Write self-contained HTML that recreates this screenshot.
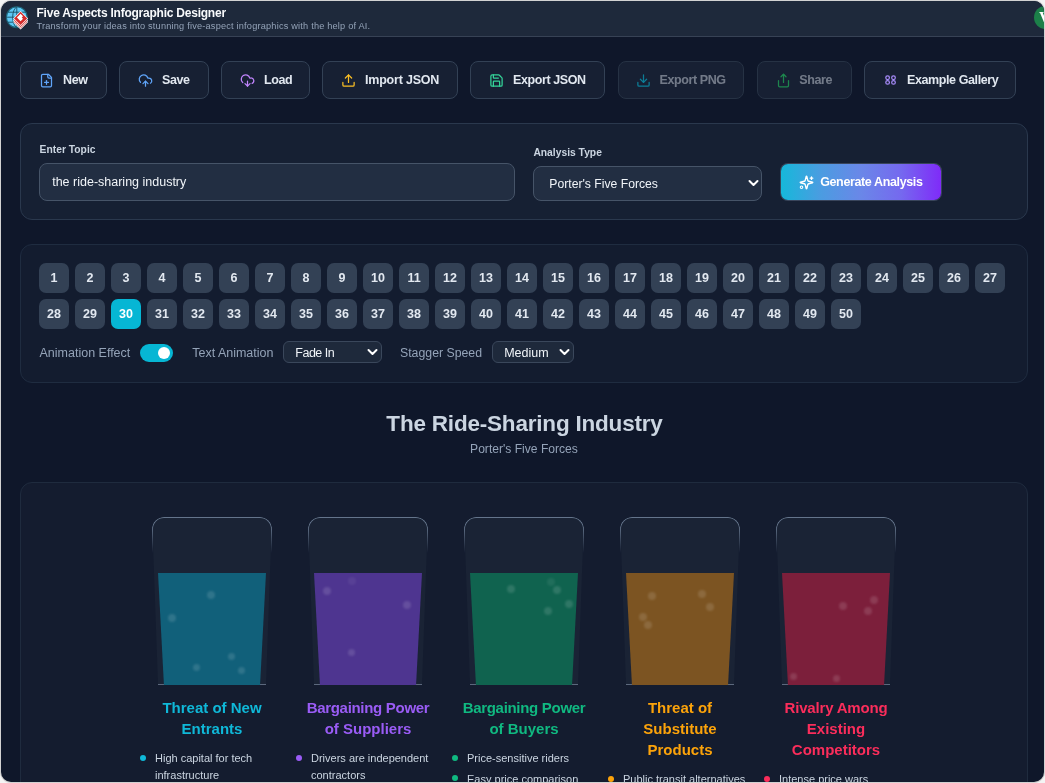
<!DOCTYPE html><html><head><meta charset="utf-8"><style>
*{box-sizing:border-box;margin:0;padding:0}
html,body{width:1045px;height:783px;overflow:hidden;background:#f4f4f4;font-family:"Liberation Sans",sans-serif}
#win{position:absolute;left:1px;top:1px;width:1043px;height:781px;border-radius:10px;overflow:hidden;background:#0f172a;box-shadow:0 0 0 1px #d2d2d2;will-change:transform}
.a{position:absolute;white-space:nowrap;line-height:1}
#hdr{position:absolute;left:0;top:0;width:1043px;height:36px;background:#1e293b;border-bottom:1px solid #374255}
.btn{position:absolute;top:60px;height:38px;border:1px solid #334155;background:#172033;border-radius:8px;color:#e2e8f0;white-space:nowrap}
.btn svg{position:absolute;left:18px;top:10.8px;width:15px;height:15px;fill:none;stroke-width:2;stroke-linecap:round;stroke-linejoin:round}
.btn span{position:absolute;left:42px;top:12.4px;font-size:12.5px;font-weight:bold;letter-spacing:-0.4px;line-height:1}
.btn.dis span{opacity:.45}.btn.dis svg{opacity:.62}.btn.dis{border-color:#263244}
.panel{position:absolute;left:19px;width:1008px;border-radius:12px}
.num{position:absolute;width:30px;height:30px;border-radius:7px;background:#334155;color:#e2e8f0;font-size:12.5px;font-weight:bold;text-align:center;line-height:30px}
.num.on{background:#06b6d4;color:#fff}
.cup{position:absolute;top:516px;width:120px;height:168px}
.body{position:absolute;left:0;top:0;width:120px;height:168px;background:#1a2335;clip-path:polygon(0 0,100% 0,95% 100%,5% 100%);border-radius:12px 12px 0 0}
.rim{position:absolute;left:0;top:0;width:120px;height:40px;border:1px solid #64748b;border-bottom:none;border-radius:12px 12px 0 0;-webkit-mask-image:linear-gradient(#000 0,#000 8px,transparent 36px)}
.liq{position:absolute;left:6px;top:56px;width:108px;height:112px;clip-path:polygon(0 0,100% 0,94.5% 100%,5.5% 100%)}
.bub{position:absolute;border-radius:50%;background:rgba(255,255,255,.13);filter:blur(.8px)}
.base{position:absolute;left:6px;top:167px;width:108px;height:1px;background:rgba(148,163,184,.55)}
.ttl{position:absolute;width:144px;text-align:center;font-size:15px;font-weight:bold;line-height:21px;white-space:nowrap}
.li{position:absolute;font-size:11px;line-height:16.8px;color:#cbd5e1;white-space:nowrap}
.dot{position:absolute;width:6px;height:6px;border-radius:50%}
</style></head><body><div id="win">
<div id="hdr">
<svg class="a" style="left:4px;top:4px" width="26" height="26" viewBox="0 0 26 26">
<circle cx="11.8" cy="12.2" r="10.4" fill="#5ec8f5" stroke="#1d6478" stroke-width="1.1"/>
<path d="M11.8 1.8v20.8M1.4 12.2h20.8M2.6 7.2h18.4M2.6 17.2h18.4M11.8 1.8c-5.5 3-5.5 17.8 0 20.8" fill="none" stroke="#1b4f63" stroke-width="0.9"/>
<g transform="translate(15.6 13.4) rotate(45)">
<rect x="-2.75" y="-2.75" width="10.6" height="10.6" fill="#fff"/>
<rect x="-2.1" y="-2.1" width="9.3" height="9.3" fill="#d42b2b"/>
<rect x="-3.9" y="-3.9" width="10.6" height="10.6" fill="#fff"/>
<rect x="-3.25" y="-3.25" width="9.3" height="9.3" fill="#d42b2b"/>
<rect x="-5.3" y="-5.3" width="10.6" height="10.6" fill="#fff"/>
<rect x="-4.65" y="-4.65" width="9.3" height="9.3" fill="#d42b2b"/>
<path d="M-3.2 -3.2h3.4v1.8h1.8v3.4h-5.2z" fill="#fff"/>
</g></svg>
<div class="a" style="left:35.5px;top:5.64px;font-size:12px;font-weight:bold;color:#f8fafc;letter-spacing:-0.23px">Five Aspects Infographic Designer</div>
<div class="a" style="left:35.5px;top:20.51px;font-size:9.2px;color:#94a3b8;letter-spacing:0.2px">Transform your ideas into stunning five-aspect infographics with the help of AI.</div>
<div class="a" style="left:1032.5px;top:4.8px;width:23.5px;height:23.5px;border-radius:50%;background:#1c8049;color:#fff;font-family:'Liberation Serif',serif;font-weight:bold;font-size:16px;line-height:24.5px;padding-left:5.5px">V</div>
</div>
<div class="btn" style="left:19px;width:87px"><svg viewBox="0 0 24 24" stroke="#60a5fa"><path d="M15 2H6a2 2 0 0 0-2 2v16a2 2 0 0 0 2 2h12a2 2 0 0 0 2-2V7Z"/><path d="M14 2v4a2 2 0 0 0 2 2h4"/><path d="M9 15h6"/><path d="M12 18v-6"/></svg><span style="">New</span></div>
<div class="btn" style="left:118px;width:90px"><svg viewBox="0 0 24 24" stroke="#60a5fa"><path d="M12 13v8"/><path d="M4 14.899A7 7 0 1 1 15.71 8h1.79a4.5 4.5 0 0 1 2.5 8.242"/><path d="m8 17 4-4 4 4"/></svg><span style="">Save</span></div>
<div class="btn" style="left:220px;width:89px"><svg viewBox="0 0 24 24" stroke="#c084fc"><path d="M12 13v8l-4-4"/><path d="m12 21 4-4"/><path d="M4.393 15.269A7 7 0 1 1 15.71 8h1.79A4.5 4.5 0 0 1 19.436 16.6"/></svg><span style="">Load</span></div>
<div class="btn" style="left:321px;width:136px"><svg viewBox="0 0 24 24" stroke="#fbbf24"><path d="M21 15v4a2 2 0 0 1-2 2H5a2 2 0 0 1-2-2v-4"/><polyline points="17 8 12 3 7 8"/><line x1="12" x2="12" y1="3" y2="15"/></svg><span style="letter-spacing:-0.2px">Import JSON</span></div>
<div class="btn" style="left:469px;width:135px"><svg viewBox="0 0 24 24" stroke="#34d399"><path d="M15.2 3a2 2 0 0 1 1.4.6l3.8 3.8a2 2 0 0 1 .6 1.4V19a2 2 0 0 1-2 2H5a2 2 0 0 1-2-2V5a2 2 0 0 1 2-2z"/><path d="M17 21v-7a1 1 0 0 0-1-1H8a1 1 0 0 0-1 1v7"/><path d="M7 3v4a1 1 0 0 0 1 1h7"/></svg><span style="">Export JSON</span></div>
<div class="btn dis" style="left:617px;width:126px"><svg viewBox="0 0 24 24" stroke="#06b6d4" style="left:17px"><path d="M21 15v4a2 2 0 0 1-2 2H5a2 2 0 0 1-2-2v-4"/><polyline points="7 10 12 15 17 10"/><line x1="12" x2="12" y1="15" y2="3"/></svg><span style="left:40.5px">Export PNG</span></div>
<div class="btn dis" style="left:756px;width:95px"><svg viewBox="0 0 24 24" stroke="#22c55e"><path d="M4 12v8a2 2 0 0 0 2 2h12a2 2 0 0 0 2-2v-8"/><polyline points="16 6 12 2 8 6"/><line x1="12" x2="12" y1="2" y2="15"/></svg><span style="left:41.3px">Share</span></div>
<div class="btn" style="left:863px;width:152px"><svg viewBox="0 0 24 24" stroke="#a78bfa"><circle cx="7.35" cy="7.5" r="2.9"/><circle cx="16.8" cy="7.5" r="2.9"/><circle cx="7.35" cy="15" r="2.9"/><circle cx="16.8" cy="15" r="2.9"/></svg><span style="">Example Gallery</span></div>
<div class="panel" style="top:122px;height:97px;background:#162033;border:1px solid #2a384d"></div>
<div class="a" style="left:38.6px;top:144.28px;font-size:10.3px;font-weight:bold;color:#cbd5e1">Enter Topic</div>
<div class="a" style="left:38px;top:162px;width:476px;height:38px;border:1px solid #465468;background:#222e42;border-radius:8px"></div>
<div class="a" style="left:51.2px;top:175.32px;font-size:12.5px;color:#f1f5f9">the ride-sharing industry</div>
<div class="a" style="left:532.4px;top:147.48px;font-size:10.3px;font-weight:bold;color:#cbd5e1">Analysis Type</div>
<div class="a" style="left:532px;top:165px;width:229px;height:35px;border:1px solid #465468;background:#222e42;border-radius:8px"></div>
<div class="a" style="left:548.3px;top:177.27px;font-size:12.2px;color:#f1f5f9">Porter's Five Forces</div>
<svg class="a" style="left:746.5px;top:178px" width="11" height="9" viewBox="0 0 11 9"><path d="M1.5 2l4 4 4-4" fill="none" stroke="#fff" stroke-width="2" stroke-linecap="round" stroke-linejoin="round"/></svg>
<div class="a" style="left:779.7px;top:163px;width:160.5px;height:36px;border-radius:7px;background:linear-gradient(90deg,#16b8da 0%,#4b9ce1 25%,#6a87e8 50%,#7569ef 75%,#7f2bf8 100%);box-shadow:0 0 0 1px rgba(100,116,139,.45)"></div>
<svg class="a" style="left:797.9px;top:174px" width="15" height="15" viewBox="0 0 24 24" fill="none" stroke="#fff" stroke-width="2.2" stroke-linecap="round" stroke-linejoin="round"><path d="M9.937 15.5A2 2 0 0 0 8.5 14.063l-6.135-1.582a.5.5 0 0 1 0-.962L8.5 9.936A2 2 0 0 0 9.937 8.5l1.582-6.135a.5.5 0 0 1 .963 0L14.063 8.5A2 2 0 0 0 15.5 9.937l6.135 1.581a.5.5 0 0 1 0 .964L15.5 14.063a2 2 0 0 0-1.437 1.437l-1.582 6.135a.5.5 0 0 1-.963 0z"/><path d="M20 3v4"/><path d="M22 5h-4"/><circle cx="4" cy="19.5" r="2" stroke-width="1.7"/></svg>
<div class="a" style="left:819.2px;top:175.02px;font-size:12.5px;font-weight:bold;color:#fff;letter-spacing:-0.37px">Generate Analysis</div>
<div class="panel" style="top:243px;height:139px;background:#131c2f;border:1px solid #1f2c40"></div>
<div class="num" style="left:38px;top:262px">1</div>
<div class="num" style="left:74px;top:262px">2</div>
<div class="num" style="left:110px;top:262px">3</div>
<div class="num" style="left:146px;top:262px">4</div>
<div class="num" style="left:182px;top:262px">5</div>
<div class="num" style="left:218px;top:262px">6</div>
<div class="num" style="left:254px;top:262px">7</div>
<div class="num" style="left:290px;top:262px">8</div>
<div class="num" style="left:326px;top:262px">9</div>
<div class="num" style="left:362px;top:262px">10</div>
<div class="num" style="left:398px;top:262px">11</div>
<div class="num" style="left:434px;top:262px">12</div>
<div class="num" style="left:470px;top:262px">13</div>
<div class="num" style="left:506px;top:262px">14</div>
<div class="num" style="left:542px;top:262px">15</div>
<div class="num" style="left:578px;top:262px">16</div>
<div class="num" style="left:614px;top:262px">17</div>
<div class="num" style="left:650px;top:262px">18</div>
<div class="num" style="left:686px;top:262px">19</div>
<div class="num" style="left:722px;top:262px">20</div>
<div class="num" style="left:758px;top:262px">21</div>
<div class="num" style="left:794px;top:262px">22</div>
<div class="num" style="left:830px;top:262px">23</div>
<div class="num" style="left:866px;top:262px">24</div>
<div class="num" style="left:902px;top:262px">25</div>
<div class="num" style="left:938px;top:262px">26</div>
<div class="num" style="left:974px;top:262px">27</div>
<div class="num" style="left:38px;top:298px">28</div>
<div class="num" style="left:74px;top:298px">29</div>
<div class="num on" style="left:110px;top:298px">30</div>
<div class="num" style="left:146px;top:298px">31</div>
<div class="num" style="left:182px;top:298px">32</div>
<div class="num" style="left:218px;top:298px">33</div>
<div class="num" style="left:254px;top:298px">34</div>
<div class="num" style="left:290px;top:298px">35</div>
<div class="num" style="left:326px;top:298px">36</div>
<div class="num" style="left:362px;top:298px">37</div>
<div class="num" style="left:398px;top:298px">38</div>
<div class="num" style="left:434px;top:298px">39</div>
<div class="num" style="left:470px;top:298px">40</div>
<div class="num" style="left:506px;top:298px">41</div>
<div class="num" style="left:542px;top:298px">42</div>
<div class="num" style="left:578px;top:298px">43</div>
<div class="num" style="left:614px;top:298px">44</div>
<div class="num" style="left:650px;top:298px">45</div>
<div class="num" style="left:686px;top:298px">46</div>
<div class="num" style="left:722px;top:298px">47</div>
<div class="num" style="left:758px;top:298px">48</div>
<div class="num" style="left:794px;top:298px">49</div>
<div class="num" style="left:830px;top:298px">50</div>
<div class="a" style="left:38.5px;top:345.82px;font-size:12.5px;color:#94a3b8">Animation Effect</div>
<div class="a" style="left:139px;top:342.7px;width:33px;height:18px;border-radius:9px;background:#06b6d4"></div>
<div class="a" style="left:157px;top:346px;width:12px;height:12px;border-radius:50%;background:#fff"></div>
<div class="a" style="left:191.2px;top:345.82px;font-size:12.5px;color:#94a3b8">Text Animation</div>
<div class="a" style="left:282.2px;top:340.3px;width:99px;height:22px;border:1px solid #3a475b;background:#1e293b;border-radius:6px"></div>
<div class="a" style="left:294.3px;top:345.82px;font-size:12.5px;color:#f1f5f9;letter-spacing:-0.5px">Fade In</div>
<svg class="a" style="left:366px;top:347px" width="11" height="9" viewBox="0 0 11 9"><path d="M1.5 2l4 4 4-4" fill="none" stroke="#fff" stroke-width="2" stroke-linecap="round" stroke-linejoin="round"/></svg>
<div class="a" style="left:399px;top:345.99px;font-size:12.3px;color:#94a3b8">Stagger Speed</div>
<div class="a" style="left:491px;top:340.3px;width:82px;height:22px;border:1px solid #3a475b;background:#1e293b;border-radius:6px"></div>
<div class="a" style="left:503.2px;top:345.82px;font-size:12.5px;color:#f1f5f9">Medium</div>
<svg class="a" style="left:558px;top:347px" width="11" height="9" viewBox="0 0 11 9"><path d="M1.5 2l4 4 4-4" fill="none" stroke="#fff" stroke-width="2" stroke-linecap="round" stroke-linejoin="round"/></svg>
<div class="a" style="left:0;width:1047px;text-align:center;top:411.75px;font-size:22.5px;font-weight:bold;color:#cbd5e1;letter-spacing:-0.2px">The Ride-Sharing Industry</div>
<div class="a" style="left:0;width:1046px;text-align:center;top:442.16px;font-size:12.1px;color:#94a3b8">Porter's Five Forces</div>
<div class="panel" style="top:481px;height:320px;background:#141c2f;border:1px solid #1f2b3e"></div>
<div class="cup" style="left:151px"><div class="body"></div><div class="rim"></div><div class="base"></div><div class="liq" style="background:#11607a">
<div class="bub" style="left:49.0px;top:18.0px;width:8.0px;height:8.0px"></div>
<div class="bub" style="left:9.7px;top:40.5px;width:8.0px;height:8.0px"></div>
<div class="bub" style="left:70.4px;top:80.1px;width:7.0px;height:7.0px"></div>
<div class="bub" style="left:34.5px;top:90.8px;width:7.0px;height:7.0px"></div>
<div class="bub" style="left:80.3px;top:94.2px;width:7.0px;height:7.0px"></div>
</div></div>
<div class="ttl" style="left:139px;top:696.30px;color:#0fb8d8">Threat of New<br>Entrants</div>
<div class="dot" style="left:139px;top:754.2px;background:#0fb8d8"></div>
<div class="li" style="left:154px;top:748.79px">High capital for tech<br>infrastructure</div>
<div class="cup" style="left:307px"><div class="body"></div><div class="rim"></div><div class="base"></div><div class="liq" style="background:#4e3590">
<div class="bub" style="left:8.9px;top:13.6px;width:8.0px;height:8.0px"></div>
<div class="bub" style="left:34.3px;top:4.1px;width:8.0px;height:8.0px;background:rgba(255,255,255,0.06)"></div>
<div class="bub" style="left:88.5px;top:27.8px;width:8.0px;height:8.0px"></div>
<div class="bub" style="left:34.4px;top:76.1px;width:7.0px;height:7.0px"></div>
</div></div>
<div class="ttl" style="left:295px;top:696.30px;color:#9a5cf6"><span style="letter-spacing:-0.3px">Bargaining Power</span><br>of Suppliers</div>
<div class="dot" style="left:295px;top:754.2px;background:#9a5cf6"></div>
<div class="li" style="left:310px;top:748.79px">Drivers are independent<br>contractors</div>
<div class="cup" style="left:463px"><div class="body"></div><div class="rim"></div><div class="base"></div><div class="liq" style="background:#10634f">
<div class="bub" style="left:36.9px;top:11.6px;width:8.0px;height:8.0px"></div>
<div class="bub" style="left:77.0px;top:4.7px;width:8.0px;height:8.0px;background:rgba(255,255,255,0.07)"></div>
<div class="bub" style="left:82.8px;top:12.7px;width:8.0px;height:8.0px"></div>
<div class="bub" style="left:94.7px;top:27.1px;width:8.0px;height:8.0px"></div>
<div class="bub" style="left:73.7px;top:34.0px;width:8.0px;height:8.0px"></div>
</div></div>
<div class="ttl" style="left:451px;top:696.30px;color:#10b981"><span style="letter-spacing:-0.3px">Bargaining Power</span><br>of Buyers</div>
<div class="dot" style="left:451px;top:754.2px;background:#10b981"></div>
<div class="li" style="left:466px;top:748.79px">Price-sensitive riders</div>
<div class="dot" style="left:451px;top:774.2px;background:#10b981"></div>
<div class="li" style="left:466px;top:769.69px">Easy price comparison</div>
<div class="cup" style="left:619px"><div class="body"></div><div class="rim"></div><div class="base"></div><div class="liq" style="background:#7c5422">
<div class="bub" style="left:21.9px;top:18.8px;width:8.0px;height:8.0px"></div>
<div class="bub" style="left:71.8px;top:16.6px;width:8.0px;height:8.0px"></div>
<div class="bub" style="left:79.7px;top:30.4px;width:8.0px;height:8.0px"></div>
<div class="bub" style="left:12.8px;top:39.8px;width:8.0px;height:8.0px"></div>
<div class="bub" style="left:17.5px;top:48.1px;width:8.0px;height:8.0px"></div>
</div></div>
<div class="ttl" style="left:607px;top:696.30px;color:#fca30a">Threat of<br>Substitute<br>Products</div>
<div class="dot" style="left:607px;top:775.2px;background:#fca30a"></div>
<div class="li" style="left:622px;top:769.79px">Public transit alternatives</div>
<div class="cup" style="left:775px"><div class="body"></div><div class="rim"></div><div class="base"></div><div class="liq" style="background:#7c1f3b">
<div class="bub" style="left:57.0px;top:28.8px;width:8.0px;height:8.0px"></div>
<div class="bub" style="left:88.0px;top:23.4px;width:8.0px;height:8.0px"></div>
<div class="bub" style="left:81.8px;top:34.2px;width:8.0px;height:8.0px"></div>
<div class="bub" style="left:7.5px;top:100.2px;width:7.0px;height:7.0px"></div>
<div class="bub" style="left:51.3px;top:101.7px;width:7.0px;height:7.0px"></div>
</div></div>
<div class="ttl" style="left:763px;top:696.30px;color:#fb2d5b"><span style="letter-spacing:-0.18px">Rivalry Among</span><br>Existing<br>Competitors</div>
<div class="dot" style="left:763px;top:775.2px;background:#fb2d5b"></div>
<div class="li" style="left:778px;top:769.79px">Intense price wars</div>
</div></body></html>
